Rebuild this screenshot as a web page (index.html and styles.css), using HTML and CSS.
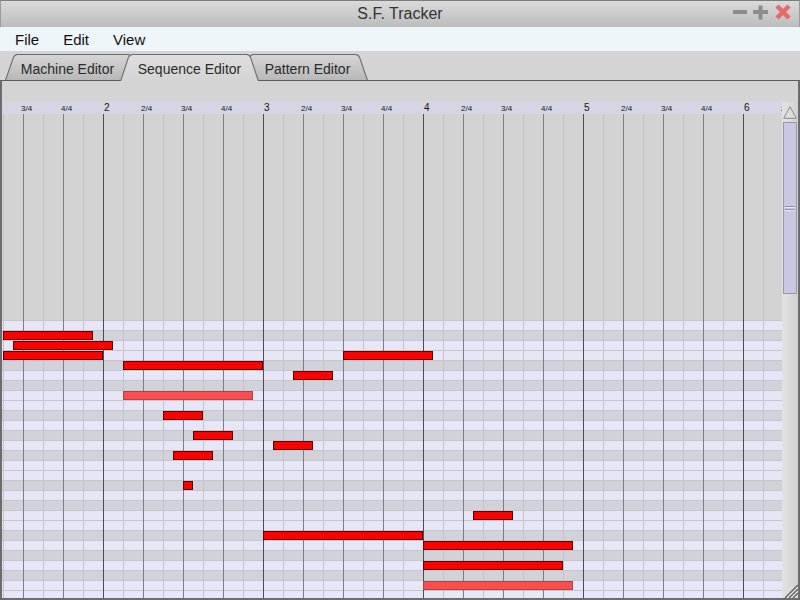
FILE: index.html
```html
<!DOCTYPE html>
<html lang="en">
<head>
<meta charset="utf-8">
<title>S.F. Tracker</title>
<link rel="stylesheet" href="styles.css">
</head>
<body>
<div class="window">
  <header class="titlebar">
    <span class="title-spacer"></span>
    <h1 class="title">S.F. Tracker</h1>
    <div class="winbtns">
      <svg width="60" height="20" viewBox="0 0 60 20" aria-hidden="true">
        <rect x="1" y="6" width="14" height="4" fill="#8c8c8c"/>
        <rect x="21" y="6" width="15" height="4" fill="#8c8c8c"/>
        <rect x="26.5" y="1.5" width="4" height="14" fill="#8c8c8c"/>
        <path d="M45 2 L57 14 M57 2 L45 14" stroke="#e36b6b" stroke-width="4.5" fill="none"/>
      </svg>
    </div>
  </header>

  <nav class="menubar">
    <span class="menu-item">File</span>
    <span class="menu-item">Edit</span>
    <span class="menu-item">View</span>
  </nav>

  <div class="tabbar">
    <div class="tab tab-machine"><div class="tab-face">Machine Editor</div></div>
    <div class="tab tab-seq active"><div class="tab-face">Sequence Editor</div></div>
    <div class="tab tab-pattern"><div class="tab-face">Pattern Editor</div></div>
  </div>

  <main class="panel">
    <div class="panel-gap"></div>
    <div class="editor">
      <div class="canvas">
        <div class="ruler">
          <span class="cell frac">3/4</span><span class="cell frac">4/4</span>
          <span class="cell num">2</span><span class="cell frac">2/4</span><span class="cell frac">3/4</span><span class="cell frac">4/4</span>
          <span class="cell num">3</span><span class="cell frac">2/4</span><span class="cell frac">3/4</span><span class="cell frac">4/4</span>
          <span class="cell num">4</span><span class="cell frac">2/4</span><span class="cell frac">3/4</span><span class="cell frac">4/4</span>
          <span class="cell num">5</span><span class="cell frac">2/4</span><span class="cell frac">3/4</span><span class="cell frac">4/4</span>
          <span class="cell num">6</span><span class="cell frac">2/4</span>
        </div>
        <div class="upper"></div>
        <div class="rows">
          <div class="note" style="grid-area: 2 / 1 / span 1 / span 9"></div>
          <div class="note" style="grid-area: 3 / 2 / span 1 / span 10"></div>
          <div class="note" style="grid-area: 4 / 1 / span 1 / span 10"></div>
          <div class="note" style="grid-area: 5 / 13 / span 1 / span 14"></div>
          <div class="note" style="grid-area: 4 / 35 / span 1 / span 9"></div>
          <div class="note" style="grid-area: 6 / 30 / span 1 / span 4"></div>
          <div class="note soft" style="grid-area: 8 / 13 / span 1 / span 13"></div>
          <div class="note" style="grid-area: 10 / 17 / span 1 / span 4"></div>
          <div class="note" style="grid-area: 12 / 20 / span 1 / span 4"></div>
          <div class="note" style="grid-area: 13 / 28 / span 1 / span 4"></div>
          <div class="note" style="grid-area: 14 / 18 / span 1 / span 4"></div>
          <div class="note" style="grid-area: 17 / 19 / span 1 / span 1"></div>
          <div class="note" style="grid-area: 20 / 48 / span 1 / span 4"></div>
          <div class="note" style="grid-area: 22 / 27 / span 1 / span 16"></div>
          <div class="note" style="grid-area: 23 / 43 / span 1 / span 15"></div>
          <div class="note" style="grid-area: 25 / 43 / span 1 / span 14"></div>
          <div class="note soft" style="grid-area: 27 / 43 / span 1 / span 15"></div>
        </div>
      </div>
      <div class="vscroll">
        <svg class="arrow" width="14" height="13" viewBox="0 0 14 13" aria-hidden="true">
          <polygon points="7,0.8 13.3,12.3 0.7,12.3" fill="#dedede" stroke="#8a8a8a" stroke-width="1"/>
        </svg>
        <div class="thumb">
          <span class="grip-line"></span>
          <span class="grip-line"></span>
        </div>
        <svg class="resize" width="14" height="14" viewBox="0 0 14 14" aria-hidden="true">
          <path d="M14 1 L1 14 M14 5 L5 14 M14 9 L9 14" stroke="#6e6e6e" stroke-width="1.6"/>
          <path d="M14 3 L3 14 M14 7 L7 14 M14 11 L11 14" stroke="#f4f4f4" stroke-width="1"/>
        </svg>
      </div>
    </div>
  </main>
</div>
</body>
</html>
```

FILE: styles.css
```css
* { box-sizing: border-box; }

html, body {
  margin: 0;
  padding: 0;
  width: 800px;
  height: 600px;
  overflow: hidden;
  background: #d4d4d4;
  font-family: "Liberation Sans", Arial, sans-serif;
  color: #222;
}

.window {
  width: 800px;
  height: 600px;
  display: flex;
  flex-direction: column;
}

/* ---------- title bar ---------- */
.titlebar {
  height: 27px;
  flex: 0 0 27px;
  display: grid;
  grid-template-columns: 1fr auto 1fr;
  align-items: center;
  border-top: 1px solid #7c7c7c;
  border-left: 1px solid #9a9a9a;
  border-right: 1px solid #9a9a9a;
  background: linear-gradient(#dadada, #bcbcbc);
}

.title {
  margin: 0;
  font-size: 16px;
  font-weight: normal;
  color: #333;
  line-height: normal;
}

.winbtns {
  justify-self: end;
  margin-right: 7px;
  display: flex;
}

/* ---------- menu bar ---------- */
.menubar {
  height: 24px;
  flex: 0 0 24px;
  display: flex;
  align-items: center;
  gap: 24px;
  padding-left: 15px;
  background: #eef6f9;
  font-size: 15px;
  color: #111;
}

/* ---------- tabs ---------- */
.tabbar {
  height: 29px;
  flex: 0 0 29px;
  display: flex;
  align-items: flex-end;
  padding-left: 5px;
  background: #d4d4d4;
}

.tab {
  position: relative;
  height: 26px;
  display: flex;
  flex-shrink: 0;
  background: #6c6c6c;
  clip-path: polygon(0 100%, 8px 3px, 9.5px 1px, 11.5px 0, calc(100% - 11.5px) 0, calc(100% - 9.5px) 1px, calc(100% - 8px) 3px, 100% 100%);
}

.tab-face {
  flex: 1;
  display: flex;
  align-items: center;
  justify-content: center;
  padding-top: 4px;
  font-size: 14px;
  color: #2a2a2a;
  white-space: nowrap;
  background: linear-gradient(#d6d6d6, #b8b8b8);
  clip-path: polygon(1.2px 100%, 9px 3.6px, 10.6px 1.7px, 12.2px 1px, calc(100% - 12.2px) 1px, calc(100% - 10.6px) 1.7px, calc(100% - 9px) 3.6px, calc(100% - 1.2px) 100%);
}

.tab-machine {
  width: 135px;
  z-index: 1;
}
.tab-machine .tab-face { padding-right: 10px; }

.tab-seq {
  width: 139px;
  margin-left: -20px;
}

.tab-pattern {
  width: 127px;
  margin-left: -18px;
  z-index: 1;
}
.tab-pattern .tab-face { padding-left: 6px; }

.tab.active {
  z-index: 3;
  height: 27px;
  margin-bottom: -1px;
}
.tab.active .tab-face {
  background: linear-gradient(#dedede, #d4d4d4);
  padding-top: 3px;
}

/* ---------- editor panel ---------- */
.panel {
  flex: 1;
  display: flex;
  flex-direction: column;
  border-top: 1px solid #5e5e5e;
  border-left: 2px solid #6c6c6c;
  border-right: 2px solid #6c6c6c;
  border-bottom: 2px solid #6c6c6c;
  background: #d4d4d4;
  min-height: 0;
}

.panel-gap {
  height: 21px;
  flex: 0 0 21px;
}

.editor {
  flex: 1;
  display: flex;
  min-height: 0;
}

.canvas {
  width: 780px;
  flex: 0 0 780px;
  display: flex;
  flex-direction: column;
  overflow: hidden;
  --vlines:
    repeating-linear-gradient(90deg, transparent 0 101px, #4d4d55 101px 102px, transparent 102px 160px),
    repeating-linear-gradient(90deg, transparent 0 21px, #7d7d85 21px 22px, transparent 22px 40px),
    repeating-linear-gradient(90deg, transparent 0 1px, #c3c3c9 1px 2px, transparent 2px 20px);
  --w: #e6e6f6;
  --b: #d2d2da;
}

.ruler {
  height: 12px;
  flex: 0 0 12px;
  display: flex;
  overflow: hidden;
  padding-left: 21px;
  background: #d5d5e6;
  color: #141414;
}

.cell {
  flex: 0 0 40px;
  white-space: nowrap;
}
.cell.num {
  font-size: 10px;
  line-height: 10px;
  padding-top: 1px;
  padding-left: 1px;
}
.cell.frac {
  font-size: 8px;
  line-height: 8px;
  padding-top: 3px;
  text-indent: -2px;
}

.upper {
  height: 206px;
  flex: 0 0 206px;
  background: var(--vlines), #d3d3d3;
}

.rows {
  flex: 0 0 280px;
  display: grid;
  grid-template-columns: repeat(78, 10px);
  grid-template-rows: repeat(28, 10px);
  padding-left: 1px;
  background:
    var(--vlines),
    repeating-linear-gradient(180deg, #c5c5cd 0 1px, transparent 1px 10px),
    repeating-linear-gradient(180deg,
      var(--w) 0 10px, var(--b) 10px 20px, var(--w) 20px 40px, var(--b) 40px 50px,
      var(--w) 50px 60px, var(--b) 60px 70px, var(--w) 70px 90px, var(--b) 90px 100px,
      var(--w) 100px 110px, var(--b) 110px 120px);
}

.note {
  margin-top: 1px;
  background: #ff0000;
  border: 1px solid #5c0000;
}
.note.soft {
  background: #ff4c4c;
  border-color: #a44848;
}

/* ---------- scrollbar ---------- */
.vscroll {
  width: 16px;
  flex: 0 0 16px;
  display: flex;
  flex-direction: column;
  align-items: center;
  padding-top: 4px;
  background: linear-gradient(90deg, #e2e2e2, #d2d2d2);
}

.arrow { flex-shrink: 0; }

.thumb {
  width: 14px;
  height: 172px;
  flex: 0 0 172px;
  margin-top: 3px;
  display: flex;
  flex-direction: column;
  align-items: center;
  justify-content: center;
  gap: 2px;
  background: #c8c8e3;
  border: 1px solid #9696a6;
}

.grip-line {
  width: 10px;
  height: 1px;
  background: #8e8ea0;
  box-shadow: 0 1px 0 #ececf6;
}

.resize {
  margin-top: auto;
  align-self: flex-end;
  flex-shrink: 0;
}
```
